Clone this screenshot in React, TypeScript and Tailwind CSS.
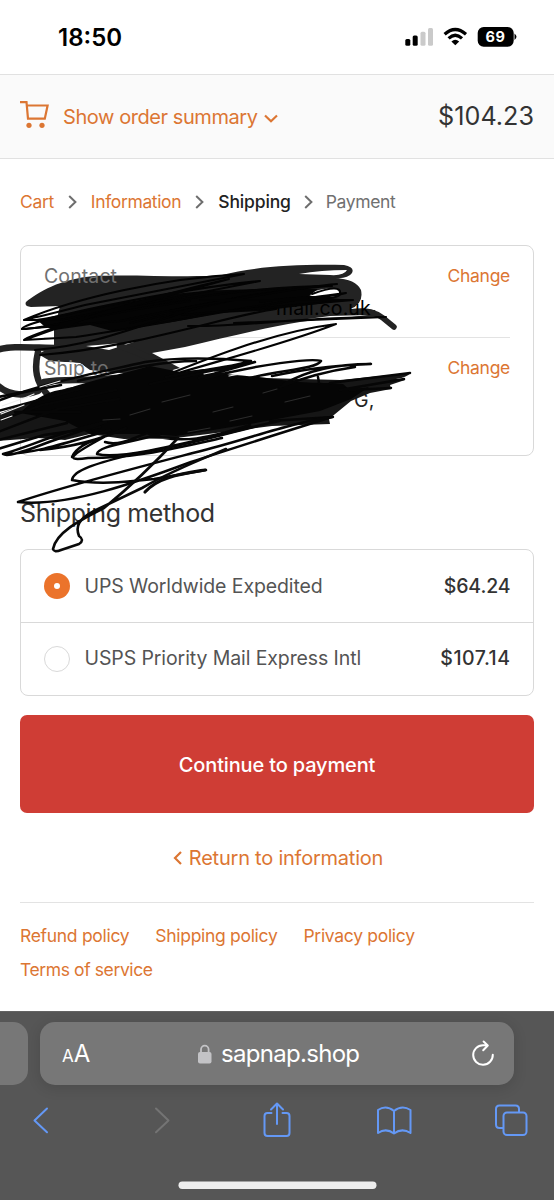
import React from "react";

const ORANGE = "text-[#dc7633]";

function Crumb() {
  return (
    <svg className="h-[14px] w-[9px]" viewBox="0 0 9 14" fill="none" stroke="#6e6e6e" strokeWidth="2">
      <path d="M1.2 1 7.4 7 1.2 13" />
    </svg>
  );
}

function Marker() {
  return (
    <svg className="pointer-events-none absolute left-0 top-[235px]" width="554" height="325" viewBox="0 235 554 325" fill="none" strokeLinecap="round" strokeLinejoin="round">
      <path fill="#232323" d="M26 302C38 292 60 279 94 276C130 274 190 278 222 275C252 267 295 264 344 265Q355 267 352 273Q348 279 335 278Q356 279 361 290Q364 304 350 309L375 310L378 316C340 318 320 319 300 322C258 329 220 339 185 347L152 353L180 368L150 376L90 370L80 363L50 361L38 354L54 346V330L60 306L31 307Q24 306 26 302Z" />
      <path fill="#fff" d="M299 274Q321 270 347 270Q344 276 330 275ZM306 294Q325 287 339 289Q342 294 336 297L318 298ZM86 346L134 342L109 350ZM300 320L330 316L368 315L336 319Z" />
      <path fill="#fff" d="M42 364Q64 360 82 364L97 379Q70 378 44 380Q40 372 42 364Z" />
      <g stroke="#232323" strokeWidth="6.5">
        <path d="M-3 350C10 345 35 348 60 348M120 346Q140 352 170 369" />
        <path d="M-3 385C8 395 22 397 38 391M38 352C34 369 36 382 47 394" />
        <path d="M44 382C64 378 85 382 115 378" />
        <path strokeWidth="5.5" d="M350 312C368 309 376 313 383 318L394 327" />
      </g>
    </svg>
  );
}

function Pen() {
  return (
    <svg className="pointer-events-none absolute left-0 top-[235px]" width="554" height="325" viewBox="0 235 554 325" fill="none" strokeLinecap="round" strokeLinejoin="round">
      <path fill="#040404" d="M36 319C52 317 92 308 145 299C190 289 235 290 285 288L318 289L309 296L350 300L301 306L260 311L220 313L172 322L112 331L90 325L54 330L44 326Z" />
      <g stroke="#030303" strokeWidth="2.1">
        <path d="M24 320C75 298 164 278 244 274L85 305C35 318 27 319 24 320L60 320L260 281C170 290 22 321 22 329C40 330 95 314 190 301" />
        <path d="M22 329L120 321C190 307 270 289 332 286C270 286 160 298 60 324M24 340C73 322 135 300 229 279L75 321C35 334 25 338 24 340L76 337C165 324 267 302 346 293C320 300 295 295 260 302" />
        <path d="M35 350C118 344 176 306 260 294L130 323M40 355C134 348 226 316 276 309M188 326C240 327 300 317 386 317L234 323" />
        <path d="M312 294Q342 283 340 294Q340 299 309 298M200 300L353 300L182 315M337 284Q300 287 170 311" />
        <path d="M336 324C265 333 191 365 127 391M336 324C290 342 236 356 175 374" />
      </g>
      <path fill="#161616" d="M-2 414L67 388L140 375L340 380L410 373Q408 377 396 379L405 380L390 385L391 389L370 393L351 401L329 419L330 424L272 426L176 438L124 439L90 434L65 440L38 438L-2 441Z" />
      <path fill="#050505" d="M20 413C35 398 50 390 67 389C91 380 118 375 150 366L180 372L204 369C223 376 251 375 273 379C306 384 321 382 343 384L350 390L369 387L351 399L320 411L250 424L176 436L148 434L90 434L65 421Z" />
      <g stroke="#060606" strokeWidth="2.5">
        <path d="M-2 401C43 383 92 374 145 362C172 358 205 357 251 361C225 369 190 371 166 377M78 381C125 370 159 361 196 361M199 378L255 362L150 384M206 378C259 364 312 358 321 361C316 369 282 370 250 378" />
        <path d="M272 376C302 370 325 366 371 364C335 364 306 371 284 384M355 367C334 370 305 377 280 387M318 377L319 383M-2 411L80 389M-2 397L61 385M350 390L391 388M333 417L270 421M330 383L410 373M340 390L404 379" />
        <path d="M-2 421L42 405L116 390M-2 432L58 409L119 399M-2 440L67 423M-2 449L44 435L100 427M15 412H80" />
        <path d="M3 454C29 447 60 431 106 422L49 442C20 453 7 457 3 454C32 455 75 440 110 430M40 450C73 447 104 438 126 428M72 457C75 449 86 442 106 436C67 457 65 461 88 458C133 458 163 451 222 438" />
        <path d="M97 454C98 446 125 444 160 434M97 454C117 459 164 449 252 427M105 442C118 446 132 439 147 433C179 446 213 437 250 425M150 437L178 438" />
        <path d="M72 480C73 469 103 462 133 454C198 444 236 430 279 421M72 480C98 485 125 482 154 479L206 470M18 502C75 483 151 464 212 448C260 435 295 422 332 417C284 432 236 447 191 462C137 482 69 507 18 502" />
      </g>
      <g stroke="#0a0a0a" strokeWidth="2.6">
        <path strokeWidth="3.2" d="M145 492C158 477 181 474 205 470" />
        <path d="M178 438C155 463 130 487 104 508C78 521 56 533 53 549Q54 553 61 550L79 544Q85 540 79 536C75 526 79 519 94 511L142 488C175 469 207 457 226 449" />
      </g>
      <g stroke="#2c2c2c" strokeWidth="1.2">
        <path d="M162 402L190 395M103 420L120 419M188 432L210 428M213 412L233 407M263 393L277 389M130 415L150 409M230 421L252 416M285 402L310 396" />
      </g>
      <path stroke="#eee" strokeWidth="1.2" d="M1 414L24 405M2 406L30 396M22 399L34 394M1 420L12 416M40 387L60 381M204 374L214 372M229 376L240 374" />
    </svg>
  );
}

function Contact() {
  return (
    <section className="mt-[30px] h-[211px] rounded-[8px] border-[1.5px] border-[#d9d9d9] pl-[23px] pr-[23px]">
      <div className="flex h-[91.5px] justify-between border-b-[1.5px] border-[#e3e3e3] pt-[17px]">
        <div className="relative z-10 flex flex-col text-[19.5px] leading-[26px] tracking-[0.1px]">
          <span className="text-[#707070]">Contact</span>
          <span className="mt-[6px] pl-[232px] text-black">mail.co.uk</span>
        </div>
        <span className={`text-[17.5px] leading-[26px] tracking-[-0.3px] ${ORANGE}`}>Change</span>
      </div>
      <div className="flex justify-between pt-[17px]">
        <div className="relative z-10 flex flex-col text-[19.5px] leading-[26px] tracking-[0.1px]">
          <span className="text-[#707070]">Ship to</span>
          <span className="mt-[6px] pl-[310px] text-[#252525]">G,</span>
        </div>
        <span className={`text-[17.5px] leading-[26px] tracking-[-0.3px] ${ORANGE}`}>Change</span>
      </div>
    </section>
  );
}

export default function App() {
  return (
    <div className="relative flex h-[1200px] w-[554px] flex-col overflow-hidden bg-white font-[Inter,'Liberation_Sans',sans-serif] text-[#333]">
      <div className="flex h-[74px] shrink-0 items-center justify-between pl-[58px] pr-[37px]">
        <span className="mt-[1px] text-[24px] font-semibold leading-[28px] text-black">18:50</span>
        <svg width="114" height="24" viewBox="403 25 114 24">
          <rect x="405.3" y="39" width="5" height="6.7" rx="1.5" />
          <rect x="412.7" y="35.5" width="5" height="10.2" rx="1.5" />
          <rect x="420.5" y="31.7" width="5" height="14" rx="1.5" fill="#cacaca" />
          <rect x="428" y="28" width="5" height="17.7" rx="1.5" fill="#cacaca" />
          <g fill="none" stroke="#000" strokeWidth="3.2">
            <path d="M444.6 34.2Q455.2 24.8 466 34.2" />
            <path d="M448.6 38.4Q455.2 32.2 462 38.4" />
          </g>
          <path d="M451.4 41.4Q455.2 38.3 459.2 41.4L455.3 45.3Z" />
          <rect x="477.7" y="27" width="36" height="19.7" rx="6" />
          <path d="M514.5 33.5Q518.5 36.8 514.5 40Z" />
          <text x="495.6" y="42.2" textAnchor="middle" fill="#fff" fontFamily="Inter" fontWeight="700" fontSize="14.5" letterSpacing="0.6">69</text>
        </svg>
      </div>
      <header className="flex h-[85px] shrink-0 items-center border-y-[1.5px] border-[#e1e1e1] bg-[#fafafa] px-5">
        <svg className="mb-[4px]" width="29" height="29" viewBox="20 100 29 29" fill="none" stroke="#dc7633" strokeWidth="2.2">
          <path d="M20 102.2H26.5L28 118.7H44.8L47.6 105.5H27" />
          <circle cx="29" cy="125.3" r="2.6" fill="#dc7633" stroke="none" />
          <circle cx="42" cy="125.3" r="2.6" fill="#dc7633" stroke="none" />
        </svg>
        <span className={`ml-[14px] text-[20px] leading-[28px] tracking-[-0.43px] ${ORANGE}`}>Show order summary</span>
        <svg className="ml-[6px] mt-[3px]" width="14" height="9" viewBox="0 0 14 9" fill="none" stroke="#dc7633" strokeWidth="2.2">
          <path d="M1 1.5 7 7.2 13 1.5" />
        </svg>
        <span className="mb-[2px] ml-auto text-[25.2px] leading-[28px]">$104.23</span>
      </header>
      <main className="flex grow flex-col px-5">
        <nav className="mt-[30px] flex h-[26px] items-center text-[17.5px] tracking-[-0.35px]">
          <span className={ORANGE}>Cart</span>
          <span className="ml-[14px] mr-[14px]"><Crumb /></span>
          <span className={ORANGE}>Information</span>
          <span className="ml-[14px] mr-[14px]"><Crumb /></span>
          <span className="font-medium tracking-[-0.15px] text-[#222]">Shipping</span>
          <span className="ml-[13px] mr-[13px]"><Crumb /></span>
          <span className="text-[#707070]">Payment</span>
        </nav>
        <Contact />
        <h2 className="mt-[40px] text-[25px] leading-[34px] tracking-[-0.38px]">Shipping method</h2>
        <section className="mt-[19px] h-[146.5px] rounded-[8px] border-[1.5px] border-[#d9d9d9] text-[19.5px] tracking-[-0.1px] text-[#545454]">
          <div className="flex h-[73px] items-center border-b-[1.5px] border-[#d9d9d9] px-[22.5px]">
            <span className="flex size-[26px] items-center justify-center rounded-full bg-[#eb732b]"><span className="size-[6px] rounded-full bg-white" /></span>
            <span className="ml-[15px] mt-[2px]">UPS Worldwide Expedited</span>
            <span className="ml-auto mt-[2px] font-medium text-[#333]">$64.24</span>
          </div>
          <div className="flex h-[71px] items-center px-[22.5px]">
            <span className="size-[26px] rounded-full border-[1.5px] border-[#d9d9d9]" />
            <span className="ml-[15px] mt-[1px]">USPS Priority Mail Express Intl</span>
            <span className="ml-auto mt-[1px] font-medium tracking-[0.5px] text-[#333]">$107.14</span>
          </div>
        </section>
        <button className="mt-[19.5px] h-[98px] shrink-0 rounded-[7px] bg-[#cf3d35] pt-[2px] text-[20px] font-medium tracking-[-0.15px] text-white">Continue to payment</button>
        <a className={`mt-[32px] flex h-[26px] items-center justify-center pl-[2px] text-[20px] tracking-[-0.23px] ${ORANGE}`}>
          <svg className="mr-[7px]" width="9" height="14" viewBox="0 0 9 14" fill="none" stroke="#dc7633" strokeWidth="2.2"><path d="M8 1 2 7l6 6" /></svg>
          Return to information
        </a>
        <footer className={`mt-[30.5px] flex flex-wrap gap-x-[26px] border-t-[1.5px] border-[#e3e3e3] pt-[16px] text-[17.5px] leading-[34px] tracking-[-0.3px] ${ORANGE}`}>
          <span>Refund policy</span><span>Shipping policy</span><span>Privacy policy</span><span className="tracking-[-0.4px]">Terms of service</span>
        </footer>
      </main>
      <div className="flex h-[189px] shrink-0 flex-col border-t border-[#636363] bg-[#565656]">
        <div className="mt-[10px] flex h-[63px] gap-[12px]">
          <div className="w-[28px] rounded-r-[15px] bg-[#777]" />
          <div className="flex w-[474px] items-center rounded-[15px] bg-[#777] pl-[22px] pr-[20px] text-white shadow-[0_3px_14px_rgba(0,0,0,0.13)]">
            <span className="flex w-[136px] items-baseline text-[24px]"><span className="text-[17px]">A</span>A</span>
            <svg width="14" height="20" viewBox="0 0 14 20" fill="#c3c3c6"><rect y="8" width="13.5" height="11.5" rx="2" /><path d="M3 9V5.5a3.8 3.8 0 0 1 7.6 0V9" fill="none" stroke="#c3c3c6" strokeWidth="1.8" /></svg>
            <span className="ml-[9px] mt-[1px] text-[24px] tracking-[-0.7px]">sapnap.shop</span>
            <svg className="ml-auto" width="24" height="28" viewBox="0 0 24 28" fill="none" stroke="#fff" strokeWidth="2" strokeLinecap="round" strokeLinejoin="round">
              <path d="M22.8 14.8A9.8 9.8 0 1 1 13 5.2H17.5M13.6 1.5 17.8 5.5 13.2 10.3" />
            </svg>
          </div>
        </div>
        <svg className="mt-[11px]" width="554" height="104" viewBox="0 1096 554 104" fill="none" stroke="#6498f5" strokeWidth="2" strokeLinecap="round" strokeLinejoin="round">
          <path d="M47 1108.5 34.5 1120.5 47 1132.2" />
          <path stroke="#747474" d="M156 1108.5 168.5 1120.5 156 1132.2" />
          <path d="M271.5 1113H267.5Q264.5 1113 264.5 1116V1133Q264.5 1136 267.5 1136H286.5Q289.5 1136 289.5 1133V1116Q289.5 1113 286.5 1113H282.5M277 1124V1104M271 1109.5 277 1103.5 283 1109.5" />
          <path d="M394 1111Q386 1104.5 378 1110V1133Q386 1127.5 394 1133.5Q402 1127.5 410.5 1133V1110Q402 1104.5 394 1111V1133.5" />
          <path d="M503 1128H499.5Q496 1128 496 1124.5V1109Q496 1105.5 499.5 1105.5H515.5Q519 1105.5 519 1109V1112" />
          <rect x="503.5" y="1112.5" width="23" height="22.5" rx="3.5" />
          <rect x="178.5" y="1181.5" width="198" height="7.5" rx="3.7" fill="#eee" stroke="none" />
        </svg>
      </div>
      <Marker />
      <div className="pointer-events-none absolute inset-0 z-20"><Pen /></div>
    </div>
  );
}
